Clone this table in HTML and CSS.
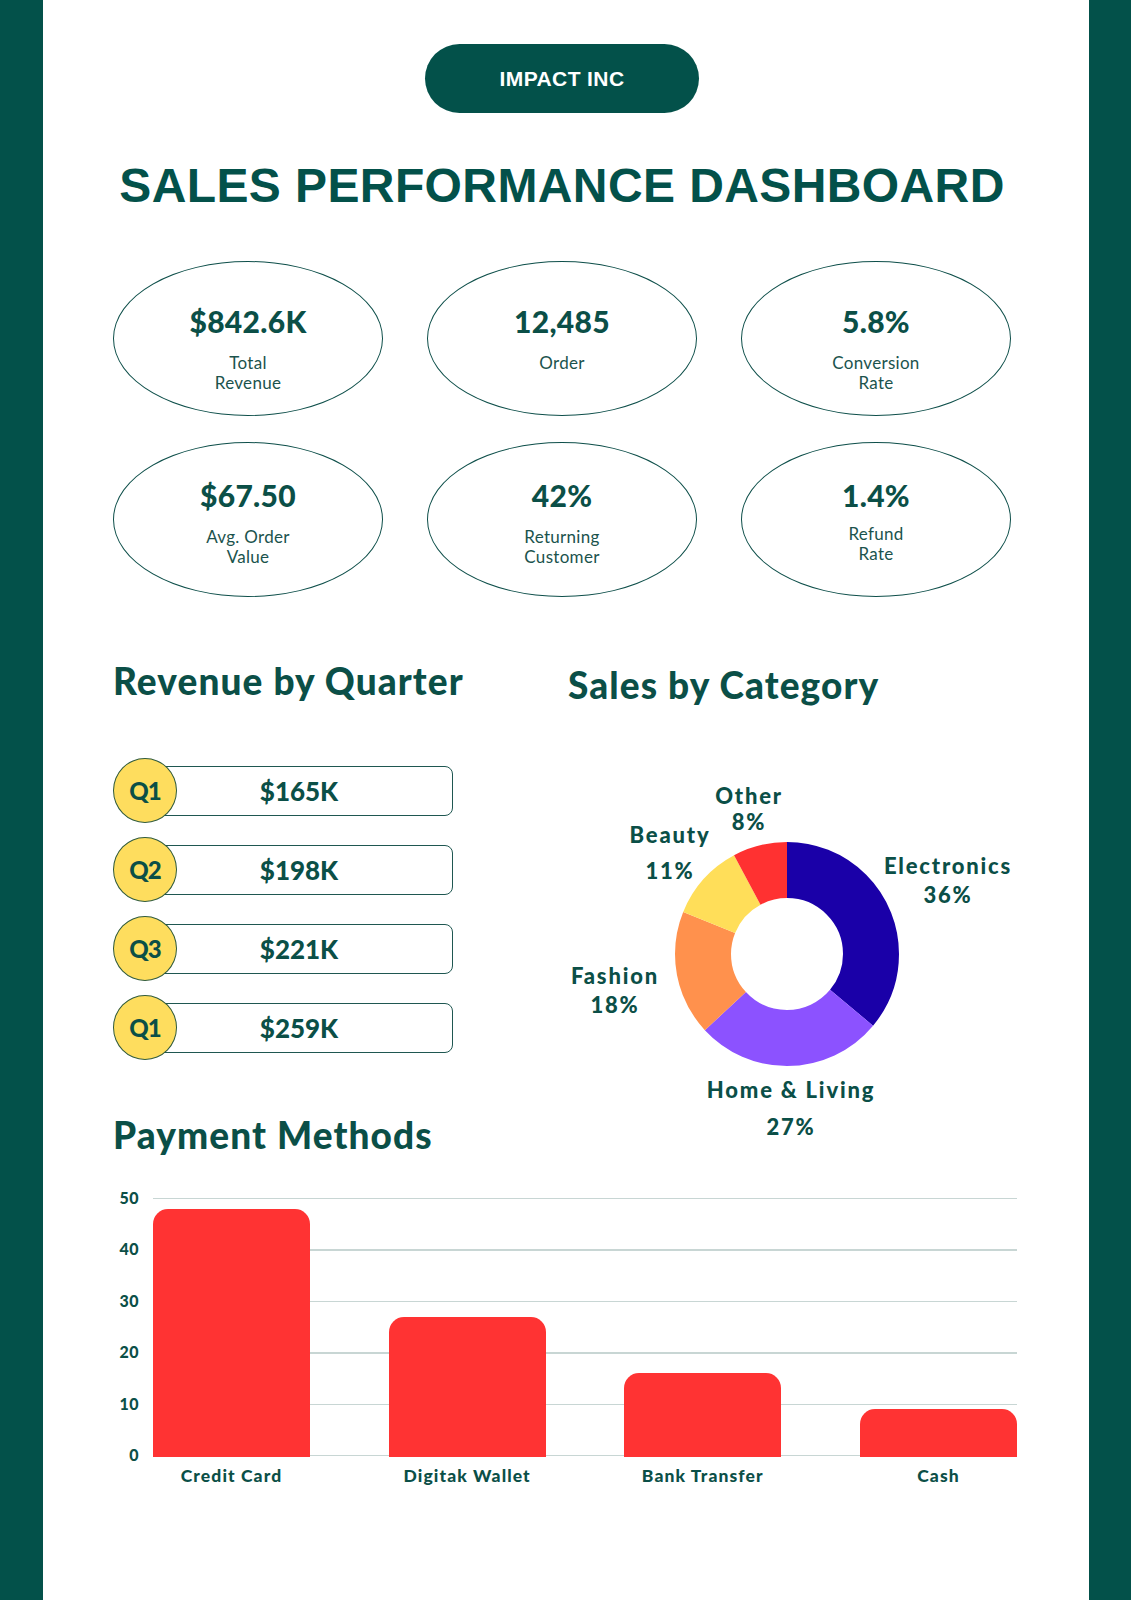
FILE: index.html
```html
<!DOCTYPE html>
<html lang="en">
<head>
<meta charset="utf-8">
<title>Sales Performance Dashboard</title>
<link rel="stylesheet" href="styles.css">
</head>
<body>
<div class="page">
  <div class="content">
    <div class="pill">IMPACT INC</div>
    <h1 class="title">SALES PERFORMANCE DASHBOARD</h1>

    <div class="kpis">
      <div class="kpi kpi--top"><div class="kpi-value">$842.6K</div><div class="kpi-label">Total<br>Revenue</div></div>
      <div class="kpi kpi--top"><div class="kpi-value">12,485</div><div class="kpi-label">Order</div></div>
      <div class="kpi kpi--top"><div class="kpi-value">5.8%</div><div class="kpi-label">Conversion<br>Rate</div></div>
      <div class="kpi"><div class="kpi-value">$67.50</div><div class="kpi-label">Avg. Order<br>Value</div></div>
      <div class="kpi"><div class="kpi-value">42%</div><div class="kpi-label">Returning<br>Customer</div></div>
      <div class="kpi"><div class="kpi-value">1.4%</div><div class="kpi-label kpi-label--up">Refund<br>Rate</div></div>
    </div>

    <div class="middle">
      <div class="col-left">
        <h2 class="heading">Revenue by Quarter</h2>
        <div class="quarters">
          <div class="q-row"><div class="q-badge">Q1</div><div class="q-box">$165K</div></div>
          <div class="q-row"><div class="q-badge">Q2</div><div class="q-box">$198K</div></div>
          <div class="q-row"><div class="q-badge">Q3</div><div class="q-box">$221K</div></div>
          <div class="q-row"><div class="q-badge">Q1</div><div class="q-box">$259K</div></div>
        </div>
        <h2 class="heading heading--payment">Payment Methods</h2>
      </div>
      <div class="col-right">
        <h2 class="heading">Sales by Category</h2>
        <div class="donut-wrap">
          <svg class="donut" width="224" height="224" viewBox="0 0 224 224">
            <g transform="rotate(-90 112 112)" fill="none" stroke-width="56">
              <circle cx="112" cy="112" r="84" stroke="#1a00a8" stroke-dasharray="190.00 527.79" stroke-dashoffset="0"/>
              <circle cx="112" cy="112" r="84" stroke="#8c52ff" stroke-dasharray="142.50 527.79" stroke-dashoffset="-190.00"/>
              <circle cx="112" cy="112" r="84" stroke="#ff914d" stroke-dasharray="95.00 527.79" stroke-dashoffset="-332.50"/>
              <circle cx="112" cy="112" r="84" stroke="#ffde59" stroke-dasharray="58.06 527.79" stroke-dashoffset="-427.50"/>
              <circle cx="112" cy="112" r="84" stroke="#ff3131" stroke-dasharray="42.23 527.79" stroke-dashoffset="-485.56"/>
            </g>
          </svg>
          <div class="d-label d-other">Other<br>8%</div>
          <div class="d-label d-beauty">Beauty<br>11%</div>
          <div class="d-label d-elec">Electronics<br>36%</div>
          <div class="d-label d-fashion">Fashion<br>18%</div>
          <div class="d-label d-home">Home &amp; Living<br>27%</div>
        </div>
      </div>
    </div>

    <div class="chart">
      <div class="y-axis">
        <span>50</span><span>40</span><span>30</span><span>20</span><span>10</span><span>0</span>
      </div>
      <div class="plot">
        <div class="bar" style="height:248px"></div>
        <div class="bar" style="height:140px"></div>
        <div class="bar" style="height:84px"></div>
        <div class="bar" style="height:48px"></div>
      </div>
      <div class="x-labels">
        <span>Credit Card</span><span>Digitak Wallet</span><span>Bank Transfer</span><span>Cash</span>
      </div>
    </div>
  </div>
</div>
</body>
</html>
```

FILE: styles.css
```css
* { box-sizing: border-box; }

html, body {
  margin: 0;
  padding: 0;
}

body {
  background: #03514a;
  font-family: "Lato", "Liberation Sans", sans-serif;
  color: #0b4f47;
}

.page {
  background: #ffffff;
  margin: 0 42px 0 43px;
  height: 1600px;
  overflow: hidden;
}

.content {
  margin-left: 70px;
  width: 898px;
  display: flex;
  flex-direction: column;
}

.pill {
  align-self: center;
  margin-top: 44px;
  width: 274px;
  height: 69px;
  border-radius: 35px;
  background: #03514a;
  color: #ffffff;
  font-family: "Liberation Sans", Arial, sans-serif;
  font-weight: 700;
  font-size: 21px;
  letter-spacing: 0.4px;
  display: flex;
  align-items: center;
  justify-content: center;
}

.title {
  margin: 49px 0 0;
  text-align: center;
  font-family: "Liberation Sans", Arial, sans-serif;
  font-weight: 700;
  font-size: 48px;
  line-height: 48px;
  letter-spacing: 0.4px;
  color: #03514a;
}

.kpis {
  margin-top: 51px;
  display: grid;
  grid-template-columns: repeat(3, 270px);
  column-gap: 44px;
  row-gap: 26px;
}

.kpi {
  height: 155px;
  border: 1.5px solid #0e4f4a;
  border-radius: 50%;
  display: flex;
  flex-direction: column;
  align-items: center;
  padding-top: 34px;
  text-align: center;
}

.kpi--top { padding-top: 41px; }

.kpi-value {
  font-weight: 900;
  font-size: 30px;
  line-height: 36px;
  letter-spacing: 0.3px;
}

.kpi-label {
  margin-top: 14px;
  font-weight: 400;
  font-size: 17px;
  line-height: 20px;
  letter-spacing: 0.3px;
  color: #1b534d;
}

.kpi-label--up { margin-top: 11px; }

.middle {
  margin-top: 62px;
  display: grid;
  grid-template-columns: 455px 443px;
}

.col-right { padding-top: 4px; }

.heading {
  margin: 0;
  font-weight: 900;
  font-size: 37px;
  line-height: 44px;
  letter-spacing: 1.1px;
  color: #0b4f47;
}

.quarters {
  margin-top: 55px;
  display: flex;
  flex-direction: column;
  gap: 14px;
}

.q-row {
  display: flex;
  align-items: center;
  height: 65px;
}

.q-badge {
  position: relative;
  z-index: 1;
  width: 64px;
  height: 65px;
  border-radius: 50%;
  background: #fedd5e;
  border: 1.5px solid #2f5a3c;
  display: flex;
  align-items: center;
  justify-content: center;
  font-weight: 900;
  font-size: 24px;
  letter-spacing: -1px;
  color: #0b4f47;
}

.q-box {
  margin-left: -32px;
  width: 308px;
  height: 50px;
  border: 1.5px solid #1f5751;
  border-radius: 8px;
  display: flex;
  align-items: center;
  justify-content: center;
  font-weight: 900;
  font-size: 26px;
}

.heading--payment { margin-top: 53px; }

.donut-wrap {
  position: relative;
  margin-top: 53px;
  height: 380px;
}

.donut {
  position: absolute;
  left: 107px;
  top: 82px;
}

.d-label {
  position: absolute;
  transform: translateX(-50%);
  text-align: center;
  white-space: nowrap;
  font-weight: 900;
  font-size: 22px;
  letter-spacing: 1.8px;
  color: #0b4f47;
}

.d-other   { left: 181px; top: 23px;  line-height: 26px; }
.d-beauty  { left: 102px; top: 57px;  line-height: 36px; }
.d-elec    { left: 380px; top: 91px;  line-height: 29px; }
.d-fashion { left: 47px;  top: 201px; line-height: 29px; }
.d-home    { left: 223px; top: 311px; line-height: 37px; }

.chart {
  margin-top: 41px;
  width: 904px;
  display: grid;
  grid-template-columns: 26px 864px;
  column-gap: 14px;
}

.y-axis {
  margin-top: -10px;
  height: 277px;
  display: flex;
  flex-direction: column;
  justify-content: space-between;
  align-items: flex-end;
  font-weight: 900;
  font-size: 16px;
  line-height: 20px;
  letter-spacing: 0.5px;
}

.plot {
  height: 258.5px;
  background-image: repeating-linear-gradient(to bottom, #c8d6d4 0, #c8d6d4 1.5px, transparent 1.5px, transparent 51.4px);
  display: flex;
  justify-content: space-between;
  align-items: flex-end;
}

.bar {
  width: 157px;
  background: #ff3333;
  border-radius: 15px 15px 0 0;
}

.x-labels {
  grid-column: 2;
  display: flex;
  justify-content: space-between;
  font-weight: 900;
  font-size: 17.5px;
  line-height: 22px;
  letter-spacing: 1.1px;
}

.x-labels span {
  width: 157px;
  text-align: center;
  white-space: nowrap;
}
```
